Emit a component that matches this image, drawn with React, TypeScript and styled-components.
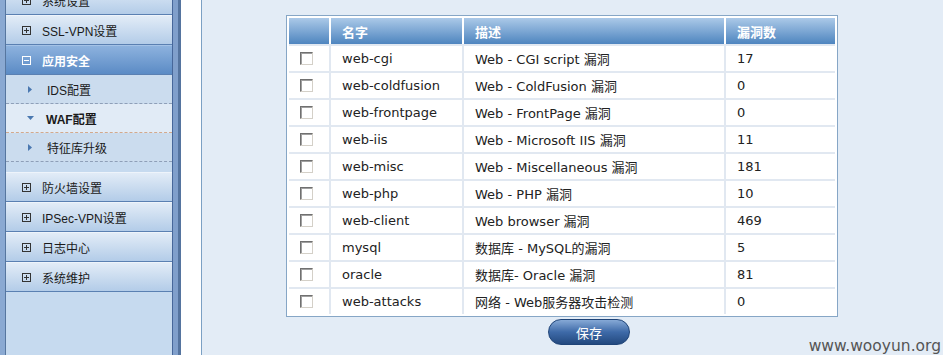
import type { VFC } from 'react'
import styled, { createGlobalStyle } from 'styled-components'

const GlobalStyle = createGlobalStyle`
  * {
    box-sizing: border-box;
  }
  html, body {
    margin: 0;
    padding: 0;
    background: #e3ecf6;
  }
`

type Rule = { name: string; desc: string; count: number }

const rules: Rule[] = [
  { name: 'web-cgi', desc: 'Web - CGI script 漏洞', count: 17 },
  { name: 'web-coldfusion', desc: 'Web - ColdFusion 漏洞', count: 0 },
  { name: 'web-frontpage', desc: 'Web - FrontPage 漏洞', count: 0 },
  { name: 'web-iis', desc: 'Web - Microsoft IIS 漏洞', count: 11 },
  { name: 'web-misc', desc: 'Web - Miscellaneous 漏洞', count: 181 },
  { name: 'web-php', desc: 'Web - PHP 漏洞', count: 10 },
  { name: 'web-client', desc: 'Web browser 漏洞', count: 469 },
  { name: 'mysql', desc: '数据库 - MySQL的漏洞', count: 5 },
  { name: 'oracle', desc: '数据库- Oracle 漏洞', count: 81 },
  { name: 'web-attacks', desc: '网络 - Web服务器攻击检测', count: 0 },
]

const BoxIcon = ({ minus, color }: { minus?: boolean; color: string }) => (
  <svg width="9" height="9" viewBox="0 0 9 9">
    <rect x="0.5" y="0.5" width="8" height="8" fill="none" stroke={color} />
    <line x1="2" y1="4.5" x2="7" y2="4.5" stroke={color} />
    {!minus && <line x1="4.5" y1="2" x2="4.5" y2="7" stroke={color} />}
  </svg>
)

const Arrow = ({ down }: { down?: boolean }) =>
  down ? (
    <svg width="7" height="4" viewBox="0 0 7 4">
      <polygon points="0,0 7,0 3.5,4" fill="#4a78b0" />
    </svg>
  ) : (
    <svg width="4" height="7" viewBox="0 0 4 7">
      <polygon points="0,0 4,3.5 0,7" fill="#4a78b0" />
    </svg>
  )

const App: VFC = () => {
  return (
    <Page>
      <GlobalStyle />
      <LeftEdge />
      <Sidebar>
        <Menu>
          <MenuItem>
            <BoxIcon color="#333" />
            <span>系统设置</span>
          </MenuItem>
          <MenuItem>
            <BoxIcon color="#333" />
            <span>SSL-VPN设置</span>
          </MenuItem>
          <MenuItem active>
            <BoxIcon minus color="#fff" />
            <span>应用安全</span>
          </MenuItem>
          <SubItem>
            <Arrow />
            <span>IDS配置</span>
          </SubItem>
          <SubItem current>
            <Arrow down />
            <span>WAF配置</span>
          </SubItem>
          <SubItem>
            <Arrow />
            <span>特征库升级</span>
          </SubItem>
          <GroupGap />
          <MenuItem>
            <BoxIcon color="#333" />
            <span>防火墙设置</span>
          </MenuItem>
          <MenuItem>
            <BoxIcon color="#333" />
            <span>IPSec-VPN设置</span>
          </MenuItem>
          <MenuItem>
            <BoxIcon color="#333" />
            <span>日志中心</span>
          </MenuItem>
          <MenuItem>
            <BoxIcon color="#333" />
            <span>系统维护</span>
          </MenuItem>
        </Menu>
      </Sidebar>
      <Rail />
      <Gutter />
      <Main>
        <RuleTable>
          <thead>
            <tr>
              <th style={{ width: 42 }} />
              <th style={{ width: 133 }}>名字</th>
              <th style={{ width: 262 }}>描述</th>
              <th>漏洞数</th>
            </tr>
          </thead>
          <tbody>
            {rules.map((rule) => (
              <tr key={rule.name}>
                <td>
                  <CheckBox />
                </td>
                <td>{rule.name}</td>
                <td>{rule.desc}</td>
                <td>{rule.count}</td>
              </tr>
            ))}
          </tbody>
        </RuleTable>
        <Actions>
          <SaveButton type="button">保存</SaveButton>
        </Actions>
        <Watermark>www.wooyun.org</Watermark>
      </Main>
    </Page>
  )
}

const Page = styled.div`
  display: flex;
  height: 355px;
  overflow: hidden;
  background: #e3ecf6;
`

const LeftEdge = styled.div`
  width: 6px;
  flex-shrink: 0;
  background: #8aa9d2;
  border-right: 1px solid #56769f;
`

const Sidebar = styled.div`
  width: 167px;
  flex-shrink: 0;
  background: #c6daef;
  border-right: 1px solid #47679a;
  overflow: hidden;
`

const Menu = styled.div`
  display: flex;
  flex-direction: column;
  margin-top: -15px;
  font-family: 'Liberation Sans', 'Noto Sans CJK SC', sans-serif;
  font-size: 12px;
  color: #1a1a1a;
`

const MenuItem = styled.div<{ active?: boolean }>`
  display: flex;
  align-items: center;
  gap: 11px;
  height: 30px;
  padding-left: 16px;
  border-top: 1px solid ${(p) => (p.active ? '#a4c2e6' : '#eef4fb')};
  border-bottom: 1px solid #5a80b2;
  background: ${(p) =>
    p.active
      ? 'linear-gradient(to bottom, #8db2de, #5b8bc5)'
      : 'linear-gradient(to bottom, #e2ecf7, #b3cce8)'};
  color: ${(p) => (p.active ? '#fff' : '#1a1a1a')};
  font-weight: ${(p) => (p.active ? 700 : 400)};
`

const SubItem = styled.div<{ current?: boolean }>`
  display: flex;
  align-items: center;
  height: 29px;
  padding-left: ${(p) => (p.current ? '21px' : '22px')};
  gap: ${(p) => (p.current ? '12px' : '15px')};
  background: ${(p) => (p.current ? '#e1ebf6' : '#cbdcee')};
  border-bottom: 1px dashed ${(p) => (p.current ? '#d3a98c' : '#8e9fb8')};
  font-weight: ${(p) => (p.current ? 700 : 400)};
`

const GroupGap = styled.div`
  height: 10px;
`

const Rail = styled.div`
  width: 8px;
  flex-shrink: 0;
  background: #809fcb;
  border-right: 3px solid #55749f;
`

const Gutter = styled.div`
  width: 21px;
  flex-shrink: 0;
  background: #fff;
  border-right: 1px solid #7ba0c4;
`

const Main = styled.div`
  position: relative;
  flex: 1;
  padding: 15px 0 0 84px;
`

const RuleTable = styled.table`
  width: 552px;
  table-layout: fixed;
  border-collapse: separate;
  border-spacing: 0;
  border: 1px solid #86a6c6;
  padding: 2px;
  background: #fff;
  font-family: 'DejaVu Sans', 'Noto Sans CJK SC', sans-serif;
  font-size: 13px;
  color: #222;

  th {
    height: 26px;
    padding: 0 0 0 11px;
    text-align: left;
    font-family: 'Noto Sans CJK SC', sans-serif;
    font-weight: 700;
    font-size: 13px;
    color: #fff;
    background: linear-gradient(to bottom, #abc9e8, #4e85bf);
    border-right: 2px solid #fff;
  }

  td {
    height: 27px;
    padding: 0 0 0 11px;
    border-top: 2px solid #e1e8f1;
    border-right: 2px solid #e1e8f1;
    white-space: nowrap;
  }

  th:last-child,
  td:last-child {
    border-right: none;
  }
`

const CheckBox = styled.span`
  display: block;
  width: 13px;
  height: 13px;
  background: #fff;
  border-top: 1px solid #707070;
  border-left: 1px solid #707070;
  border-right: 1px solid #d4d0c8;
  border-bottom: 1px solid #d4d0c8;
  box-shadow: inset 1px 1px 0 #a0a0a0;
`

const Actions = styled.div`
  display: flex;
  padding: 2px 0 0 262px;
`

const SaveButton = styled.button`
  width: 82px;
  height: 26px;
  border-radius: 13px;
  border: 1px solid #1f4478;
  background: linear-gradient(to bottom, #86a9d6, #3e6aa8 50%, #23497f);
  color: #fff;
  font-family: 'Noto Sans CJK SC', sans-serif;
  font-size: 13px;
  padding: 0;
`

const Watermark = styled.div`
  position: absolute;
  right: 2px;
  bottom: 0;
  font-family: 'DejaVu Sans', sans-serif;
  font-size: 15.5px;
  color: #555;
`

export default App
